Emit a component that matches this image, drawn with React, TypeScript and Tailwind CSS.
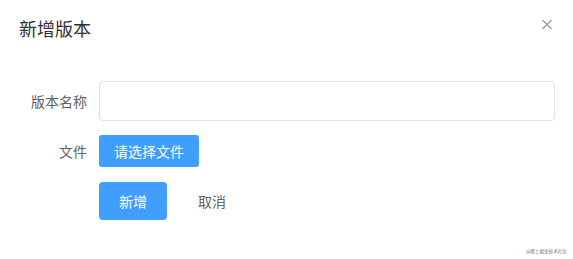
const font = { fontFamily: '"Noto Sans CJK SC", "Liberation Sans", sans-serif' };

export default function App() {
  return (
    <div className="w-[573px] h-[259px] bg-white relative overflow-hidden" style={font}>
      {/* Header */}
      <div className="flex items-start justify-between pl-[19px] pr-[21px] pt-[16px]">
        <span className="text-[18px] leading-[24px] text-[#303133]">新增版本</span>
        <button className="mt-[3px] text-[#909399]">
          <svg viewBox="0 0 10 10" className="w-[10px] h-[11px]" fill="none" stroke="currentColor" strokeWidth={1.1}>
            <path d="M0.5 0.5 9.5 9.5M9.5 0.5 0.5 9.5" />
          </svg>
        </button>
      </div>

      {/* Form */}
      <div className="flex flex-col pr-[18px] mt-[41px]">
        <div className="flex items-center h-[40px]">
          <label className="w-[87px] text-right text-[14px] text-[#606266]">版本名称</label>
          <input className="ml-[12px] flex-1 h-[40px] border border-[#dcdfe6] rounded-[4px] px-[15px] text-[14px] outline-none" />
        </div>
        <div className="flex items-center h-[32px] mt-[14px]">
          <label className="w-[87px] text-right text-[14px] text-[#606266]">文件</label>
          <button className="ml-[12px] h-[32px] px-[15px] rounded-[3px] bg-[#409eff] text-white text-[14px] leading-none">
            请选择文件
          </button>
        </div>
        <div className="flex items-center h-[38px] mt-[15px] pl-[99px]">
          <button className="h-[38px] px-[20px] rounded-[4px] bg-[#409eff] text-white text-[14px] leading-none">
            新增
          </button>
          <button className="ml-[31px] text-[14px] text-[#606266] leading-none">取消</button>
        </div>
      </div>

      <span className="absolute right-[6px] bottom-[5px] text-[4.6px] leading-none text-[#777]">@稀土掘金技术社区</span>
    </div>
  );
}
